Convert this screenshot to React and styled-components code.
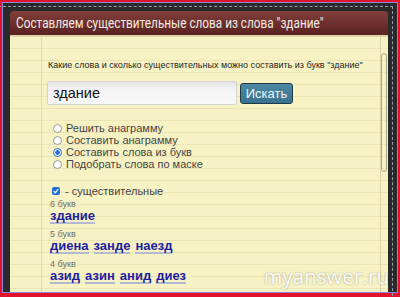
import React from "react";
import styled, { createGlobalStyle } from "styled-components";

const Global = createGlobalStyle`
  html, body { margin: 0; padding: 0; background: #fff; }
  body { width: 400px; height: 297px; overflow: hidden; font-family: "Liberation Sans", Arial, sans-serif; }
  * { box-sizing: border-box; }
`;

const Screen = styled.div`
  width: 400px;
  height: 297px;
  border: 2px solid #e2122c;
  border-bottom-width: 4px;
  background: #8e88d6;
  padding: 1px;
`;

const Frame = styled.div`
  position: relative;
  height: 100%;
  background: #2a2a2d;
  padding: 8px 9px 0 7px;
  display: flex;
  flex-direction: column;
  &::before {
    content: "";
    position: absolute;
    top: 3px;
    right: 4px;
    bottom: -4px;
    left: -10px;
    border-top: 1px dashed #9a9aa2;
    border-right: 1px dashed #9a9aa2;
    pointer-events: none;
  }
`;

const Header = styled.div`
  position: relative;
  z-index: 1;
  height: 26px;
  border-radius: 4px 4px 0 0;
  background: linear-gradient(#80403a, #6a2d2a 60%, #5a2220);
  border-bottom: 2px solid #ddd6ac;
  padding-left: 6px;
  white-space: nowrap;
  overflow: hidden;
`;

const Title = styled.span`
  display: inline-block;
  color: #f2ebe4;
  font-family: "Roboto", sans-serif;
  font-size: 15.5px;
  line-height: 24px;
  transform: scaleX(0.76);
  transform-origin: 0 50%;
`;

const Paper = styled.div`
  position: relative;
  z-index: 1;
  flex: 1;
  display: flex;
  background-color: #f6f2c4;
  background-image:
    linear-gradient(90deg, transparent 31px, #e2dba6 31px, #e2dba6 32px, transparent 32px),
    repeating-linear-gradient(180deg, transparent 0, transparent 11px, #ebe5b6 11px, #ebe5b6 12px);
`;

const Content = styled.div`
  flex: 1;
  padding: 23px 0 0 38px;
  color: #222;
`;

const ScrollTrack = styled.div`
  width: 8px;
  border-left: 1px solid #d8d2a4;
  padding: 16px 1px 0 0;
`;

const Thumb = styled.div`
  height: 119px;
  border: 1px solid #aaa68a;
  border-radius: 4px;
`;

const Lead = styled.div`
  font-size: 9px;
  line-height: 11px;
  white-space: nowrap;
  color: #1e1e1e;
`;

const SearchRow = styled.form`
  display: flex;
  align-items: center;
  gap: 3px;
  margin-top: 10px;
  margin-left: -1px;
`;

const Field = styled.div`
  width: 190px;
  height: 24px;
  border: 1px solid #d4d4d4;
  border-radius: 2px;
  background: linear-gradient(#e6e6e6, #f4f4f4 40%, #f8f8f8);
  font-size: 14.5px;
  line-height: 22px;
  padding-left: 5px;
  color: #111;
`;

const Button = styled.div`
  width: 53px;
  height: 21px;
  border: 1px solid #1d3a48;
  border-radius: 3px;
  background: linear-gradient(#4c88a2, #3a7390);
  color: #eef4f8;
  font-size: 13px;
  line-height: 19px;
  text-align: center;
`;

const Options = styled.div`
  margin-top: 17px;
  margin-left: 5px;
  display: flex;
  flex-direction: column;
`;

const Option = styled.label`
  display: flex;
  align-items: center;
  gap: 4px;
  height: 12px;
  font-size: 11px;
  color: #454545;
`;

const Radio = styled.span`
  width: 9px;
  height: 9px;
  border-radius: 50%;
  border: 1px solid ${p => (p.$on ? "#2a6fd6" : "#9a9a9a")};
  background: ${p => (p.$on ? "radial-gradient(circle, #2a6fd6 0 2px, #fff 2.5px)" : "#fff")};
  flex: none;
`;

const CheckRow = styled.label`
  display: flex;
  align-items: center;
  gap: 5px;
  margin-top: 15px;
  margin-left: 4px;
  height: 12px;
  font-size: 11px;
  color: #454545;
`;

const Check = styled.span`
  width: 8px;
  height: 8px;
  border-radius: 2px;
  background: #2070d8;
  display: flex;
  align-items: center;
  justify-content: center;
  flex: none;
`;

const Group = styled.div`
  margin-top: ${p => (p.$first ? "3px" : "6px")};
  margin-left: 2px;
`;

const Count = styled.div`
  font-size: 9px;
  line-height: 8px;
  color: #707070;
`;

const Words = styled.div`
  display: flex;
  gap: 5px;
  margin-top: 1px;
`;

const Word = styled.a`
  font-size: 13px;
  font-weight: bold;
  line-height: 13px;
  color: #1e1ea0;
  text-decoration: none;
  border-bottom: 2px solid #b4b8d2;
`;

const Watermark = styled.div`
  position: absolute;
  right: -1px;
  bottom: 2px;
  font-family: "Open Sans", "Liberation Sans", sans-serif;
  font-size: 20px;
  letter-spacing: 0.3px;
  color: rgba(255, 255, 255, 0.95);
  text-shadow: 0 0 2px rgba(80, 80, 80, 0.55);
  pointer-events: none;
`;

const groups = [
  { n: "6 букв", w: ["здание"] },
  { n: "5 букв", w: ["диена", "занде", "наезд"] },
  { n: "4 букв", w: ["азид", "азин", "анид", "диез"] },
];

const modes = [
  ["Решить анаграмму", false],
  ["Составить анаграмму", false],
  ["Составить слова из букв", true],
  ["Подобрать слова по маске", false],
];

export default function App() {
  return (
    <>
      <Global />
      <Screen>
        <Frame>
          <Header>
            <Title>Составляем существительные слова из слова "здание"</Title>
          </Header>
          <Paper>
            <Content>
              <Lead>Какие слова и сколько существительных можно составить из букв "здание"</Lead>
              <SearchRow>
                <Field>здание</Field>
                <Button>Искать</Button>
              </SearchRow>
              <Options>
                {modes.map(([t, on]) => (
                  <Option key={t}>
                    <Radio $on={on} />
                    {t}
                  </Option>
                ))}
              </Options>
              <CheckRow>
                <Check>
                  <svg width="6" height="6" viewBox="0 0 6 6">
                    <path d="M0.8 3.2 L2.4 4.8 L5.2 1.2" stroke="#fff" strokeWidth="1.3" fill="none" />
                  </svg>
                </Check>
                - существительные
              </CheckRow>
              {groups.map((g, i) => (
                <Group key={g.n} $first={i === 0}>
                  <Count>{g.n}</Count>
                  <Words>
                    {g.w.map(w => <Word key={w}>{w}</Word>)}
                  </Words>
                </Group>
              ))}
            </Content>
            <ScrollTrack>
              <Thumb />
            </ScrollTrack>
            <Watermark>myanswer.ru</Watermark>
          </Paper>
        </Frame>
      </Screen>
    </>
  );
}
